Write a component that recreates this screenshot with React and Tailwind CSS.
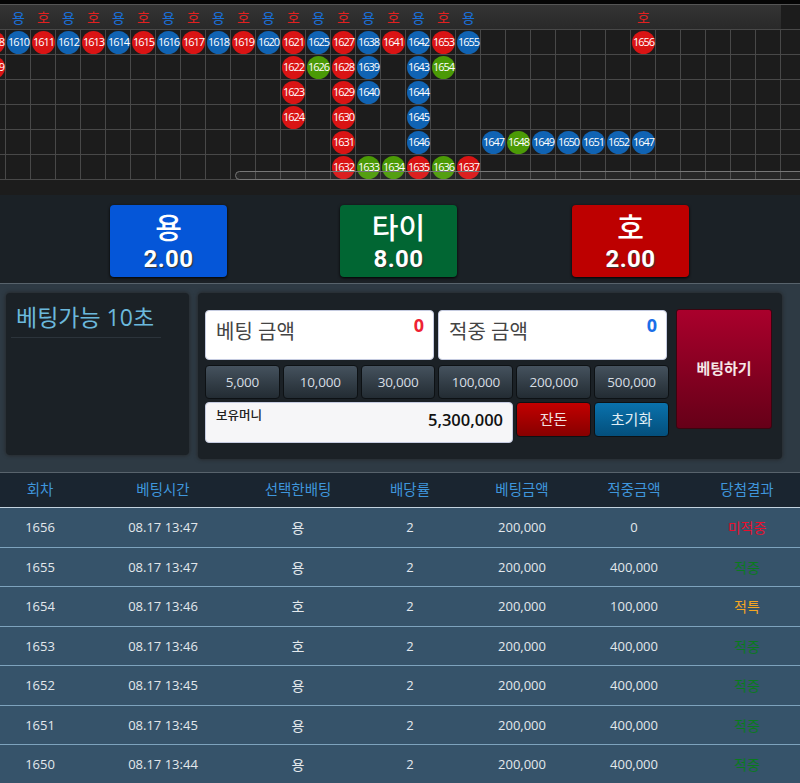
const R = 'r';
const B = 'b';
const G = 'g';

// one entry per column, six rows each
const board = [
  [['1608', R], ['1609', R]],
  [['1610', B]],
  [['1611', R]],
  [['1612', B]],
  [['1613', R]],
  [['1614', B]],
  [['1615', R]],
  [['1616', B]],
  [['1617', R]],
  [['1618', B]],
  [['1619', R]],
  [['1620', B]],
  [['1621', R], ['1622', R], ['1623', R], ['1624', R]],
  [['1625', B], ['1626', G]],
  [['1627', R], ['1628', R], ['1629', R], ['1630', R], ['1631', R], ['1632', R]],
  [['1638', B], ['1639', B], ['1640', B], null, null, ['1633', G]],
  [['1641', R], null, null, null, null, ['1634', G]],
  [['1642', B], ['1643', B], ['1644', B], ['1645', B], ['1646', B], ['1635', R]],
  [['1653', R], ['1654', G], null, null, null, ['1636', G]],
  [['1655', B], null, null, null, null, ['1637', R]],
  [null, null, null, null, ['1647', B]],
  [null, null, null, null, ['1648', G]],
  [null, null, null, null, ['1649', B]],
  [null, null, null, null, ['1650', B]],
  [null, null, null, null, ['1651', B]],
  [null, null, null, null, ['1652', B]],
  [['1656', R], null, null, null, ['1647', B]],
  [],
  [],
  [],
  [],
  [],
  [],
];

const headLabels = board.slice(0, 32).map((col, i) => {
  if (i === 0 || (i > 19 && i !== 26)) return '';
  return i % 2 === 1 ? '용' : '호';
});

const history = [
  ['1656', '08.17 13:47', '용', '0', '미적중', 'text-[#e8102e]'],
  ['1655', '08.17 13:47', '용', '400,000', '적중', 'text-[#0a7a1e]'],
  ['1654', '08.17 13:46', '호', '100,000', '적특', 'text-[#f5a623]'],
  ['1653', '08.17 13:46', '호', '400,000', '적중', 'text-[#0a7a1e]'],
  ['1652', '08.17 13:45', '용', '400,000', '적중', 'text-[#0a7a1e]'],
  ['1651', '08.17 13:45', '용', '400,000', '적중', 'text-[#0a7a1e]'],
  ['1650', '08.17 13:44', '용', '400,000', '적중', 'text-[#0a7a1e]'],
];

const tableCols = 'grid grid-cols-[80px_166px_104px_120px_104px_120px_106px]';

function Ball({ no, kind }) {
  const color = kind === R ? 'bg-[#d91414]' : kind === B ? 'bg-[#1063b3]' : 'bg-[#4b9a06]';
  return (
    <span className={`flex h-[23px] w-[23px] items-center justify-center rounded-full text-[11px] tracking-[-1px] text-white ${color}`}>
      {no}
    </span>
  );
}

function Board() {
  return (
    <div className="relative h-[180px] overflow-hidden border-t-[4px] border-[#050505] bg-[#1c1c1c] shadow-[inset_0_1px_0_#555]">
      <div className="flex h-[26px] border-b border-[#484848] pt-px">
        <div className="flex h-[24px] w-[781px] bg-gradient-to-b from-[#343434] to-[#292929] pl-[5px]">
          {headLabels.slice(1).map((label, i) => (
            <span key={i} className={`flex h-[24px] w-[25px] shrink-0 items-center justify-center pl-[2px] text-[14px] ${label === '용' ? 'text-[#1a6fd8]' : 'text-[#e02020]'}`}>
              {label}
            </span>
          ))}
        </div>
      </div>
      <div className="ml-[-19px] flex">
        {board.map((col, c) => (
          <div key={c} className="w-[25px] shrink-0">
            {[0, 1, 2, 3, 4, 5].map((r) => (
              <div key={r} className="flex h-[25px] items-end justify-end border-r border-b border-[#484848]">
                {col[r] && <Ball no={col[r][0]} kind={col[r][1]} />}
              </div>
            ))}
          </div>
        ))}
      </div>
      <div className="absolute top-[167px] left-[235px] h-[9px] w-[580px] rounded-full border border-[#777777] bg-white/5" />
    </div>
  );
}

function PickButton({ name, odds, color }) {
  return (
    <button type="button" className={`flex h-[72px] w-[117px] flex-col items-center rounded-[4px] text-white shadow-[0_1px_3px_#000] ${color}`}>
      <span className="mt-[6px] h-[34px] text-[29px] leading-[34px] font-medium">{name}</span>
      <span className="font-['Roboto'] text-[24px] leading-[28px] font-bold tracking-[0.4px] [text-shadow:1px_1px_1px_#333]">{odds}</span>
    </button>
  );
}

function AmountBox({ label, value, color }) {
  return (
    <div className="relative h-[50px] w-[229px] rounded-[4px] border border-[#c5cbe0] bg-white pt-[6px] pl-[10px] text-[20px] text-[#444444]">
      {label}
      <span className={`absolute top-[1px] right-[9px] text-[18px] font-bold ${color}`}>{value}</span>
    </div>
  );
}

function Chip({ amount }) {
  return (
    <button type="button" className="h-[34px] w-[75px] rounded-[4px] border border-[#0d1114] bg-gradient-to-b from-[#45525e] to-[#232c33] text-[13.5px] tracking-[-0.2px] text-[#d6dde3]">
      {amount}
    </button>
  );
}

function BetPanel() {
  return (
    <div className="flex h-[189px] items-start border-t border-[#58636c] bg-[#2e3a44] pt-[9px] pl-[6px]">
      <div className="h-[162px] w-[183px] rounded-[4px] bg-[#1b2126] px-[5px] pt-[9px] shadow-[0_0_4px_#222]">
        <div className="w-[150px] border-b border-[#2c343b] pb-[4px] pl-[5px] text-[23px] leading-[31px] whitespace-nowrap text-[#6bb8dc]">베팅가능 10초</div>
      </div>
      <div className="ml-[9px] flex h-[166px] w-[584px] rounded-[4px] bg-[#1b2126] pt-[17px] pl-[7px] shadow-[0_0_4px_#222]">
        <div className="w-[464px]">
          <div className="flex gap-[4px]">
            <AmountBox label="베팅 금액" value="0" color="text-[#ee2233]" />
            <AmountBox label="적중 금액" value="0" color="text-[#1a6fe8]" />
          </div>
          <div className="mt-[5px] flex gap-[3px]">
            {['5,000', '10,000', '30,000', '100,000', '200,000', '500,000'].map((a) => (
              <Chip key={a} amount={a} />
            ))}
          </div>
          <div className="mt-[3px] flex items-start">
            <div className="relative h-[41px] w-[308px] rounded-[4px] border border-[#c5cbe0] bg-[#f6f6f8] pt-[4px] pl-[10px] text-[12.5px] font-medium text-[#222222]">
              보유머니
              <span className="absolute top-[5px] right-[9px] text-[16.5px] font-semibold text-[#111111]">5,300,000</span>
            </div>
            <button type="button" className="ml-[3px] h-[35px] w-[75px] rounded-[4px] border border-[#0d1114] bg-gradient-to-b from-[#c20000] to-[#870000] text-[15px] text-[#f0e0e0]">잔돈</button>
            <button type="button" className="ml-[3px] h-[35px] w-[75px] rounded-[4px] border border-[#0d1114] bg-gradient-to-b from-[#0a72ad] to-[#044f7c] text-[15px] text-[#e0eef5]">초기화</button>
          </div>
        </div>
        <button type="button" className="-mt-px ml-[7px] h-[120px] w-[96px] rounded-[3px] border border-[#3a0510] bg-gradient-to-b from-[#aa002c] to-[#660018] pb-[1px] text-[15px] font-bold text-[#f5e6e6]">
          베팅하기
        </button>
      </div>
    </div>
  );
}

function HistoryTable() {
  return (
    <div className="border-t border-[#58636c] bg-[#36536a] text-center text-[13px] text-[#e3e8ec]">
      <div className={`${tableCols} h-[34px] items-center bg-[#1a2530] text-[14.5px] text-[#3f96dc]`}>
        {['회차', '베팅시간', '선택한배팅', '배당률', '베팅금액', '적중금액', '당첨결과'].map((h) => (
          <div key={h}>{h}</div>
        ))}
      </div>
      {history.map(([round, time, pick, win, result, color], i) => (
        <div key={round} className={`${tableCols} h-[39.5px] items-center border-t pt-px ${i === 0 ? 'border-[#c3d3df]' : 'border-[#7ea3bd]'}`}>
          <div>{round}</div>
          <div>{time}</div>
          <div className="text-[14px]">{pick}</div>
          <div>2</div>
          <div>200,000</div>
          <div>{win}</div>
          <div className={`text-[14px] ${color}`}>{result}</div>
        </div>
      ))}
    </div>
  );
}

export default function App() {
  return (
    <div className="h-[783px] w-[800px] overflow-hidden bg-[#1c1c1c] font-['Open_Sans','Noto_Sans_CJK_KR',sans-serif]">
      <Board />
      <div className="mt-[15px] grid h-[88px] grid-cols-[231px_229px_235px] justify-items-center bg-[#1b2126] pl-[53px] pt-[10px]">
        <PickButton name="용" odds="2.00" color="bg-[#0556d8]" />
        <PickButton name="타이" odds="8.00" color="bg-[#016633]" />
        <PickButton name="호" odds="2.00" color="bg-[#bd0000]" />
      </div>
      <BetPanel />
      <HistoryTable />
    </div>
  );
}
